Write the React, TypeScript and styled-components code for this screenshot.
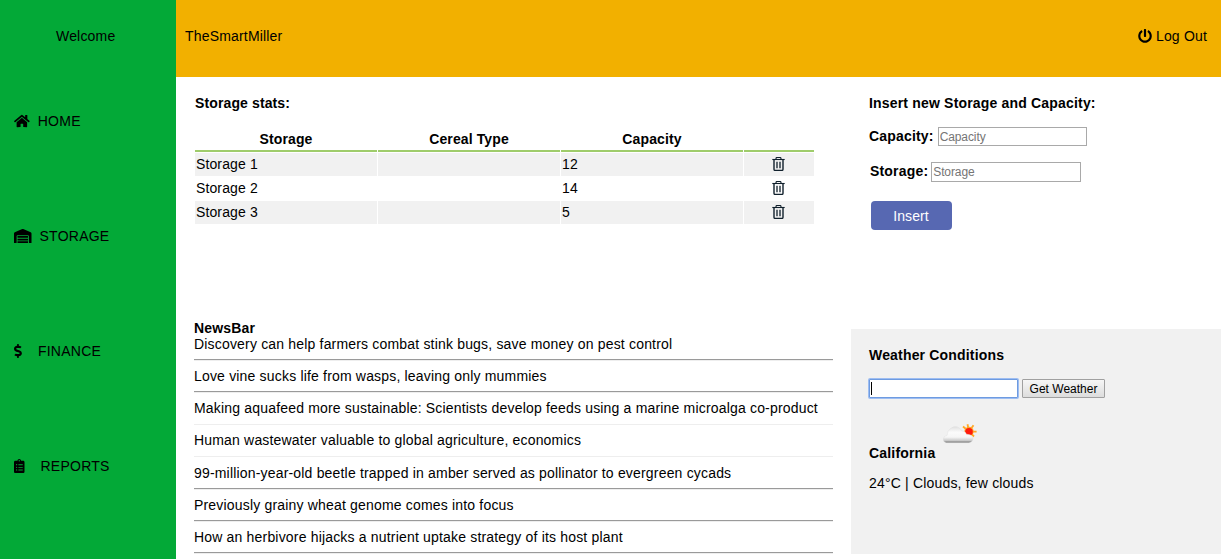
import React from 'react';
import styled, { createGlobalStyle } from 'styled-components';
import { FaHome, FaWarehouse, FaDollarSign, FaClipboardList, FaPowerOff } from 'react-icons/fa';

const GlobalStyle = createGlobalStyle`
  * { box-sizing: border-box; }
  body {
    margin: 0;
    overflow: hidden;
    background: #fff;
    color: #000;
    font: 14px/16px "Liberation Sans", Arial, sans-serif;
    letter-spacing: 0.18px;
  }
`;

const Page = styled.div`
  display: flex;
  height: 559px;
`;

const Sidebar = styled.nav`
  width: 176px;
  flex: none;
  background: #03a937;
`;

const Welcome = styled.div`
  padding: 28px 0 69px 56px;
`;

const MenuItem = styled.a<{ $gap: number; $icon: number }>`
  display: flex;
  align-items: center;
  gap: ${(p) => p.$gap}px;
  height: 16px;
  margin-bottom: 99px;
  padding-left: 14px;
  letter-spacing: 0.25px;
  svg {
    flex: none;
    width: ${(p) => p.$icon}px;
    height: 14px;
  }
`;

const Main = styled.div`
  flex: 1;
  min-width: 0;
`;

const TopBar = styled.header`
  display: flex;
  justify-content: space-between;
  height: 77px;
  padding: 28px 14px 0 9px;
  background: #f2b000;
`;

const LogOut = styled.a`
  display: flex;
  gap: 4px;
  height: 16px;
  svg { margin-top: 1px; }
`;

const Columns = styled.div`
  display: flex;
`;

const LeftColumn = styled.div`
  width: 675px;
  padding: 18px 18px 0 18px;
`;

const RightColumn = styled.div`
  flex: 1;
`;

const Heading = styled.h3`
  margin: 0;
  font-size: 14px;
  line-height: 16px;
  font-weight: bold;
`;

const StatsSection = styled.section`
  height: 225px;
  padding-left: 1px;
  letter-spacing: 0.12px;
`;

const StatsTable = styled.table`
  width: 621px;
  margin: 18px 0 0 -1px;
  table-layout: fixed;
  border-spacing: 1px;
  line-height: 16px;
`;

const HeadCell = styled.th<{ $w: number }>`
  width: ${(p) => p.$w}px;
  height: 22px;
  padding: 1px 0 3px;
  border-bottom: 2px solid #9fcc6b;
`;

const BodyRow = styled.tr`
  &:nth-child(odd) td { background: #f1f1f1; }
`;

const Cell = styled.td`
  height: 23px;
  padding: 0 1px 1px;
  vertical-align: middle;
`;

const IconCell = styled(Cell)`
  padding-right: 2px;
  svg { display: block; margin: 0 auto; }
`;

const NewsItem = styled.div`
  white-space: nowrap;
`;

const Rule = styled.hr<{ $faint?: boolean; $extra?: boolean }>`
  height: 2px;
  margin: 7px 0 ${(p) => (p.$extra ? 8 : 7)}px;
  border: 0;
  border-top: 1px solid ${(p) => (p.$faint ? 'transparent' : '#9a9a9a')};
  border-bottom: 1px solid #eee;
`;

const InsertForm = styled.form`
  height: 252px;
  padding: 18px 0 0 18px;
`;

const Field = styled.label<{ $top: number; $indent?: number; $gap: number }>`
  display: flex;
  align-items: center;
  gap: ${(p) => p.$gap}px;
  height: 19px;
  margin-top: ${(p) => p.$top}px;
  padding-left: ${(p) => p.$indent ?? 0}px;
  font-weight: bold;
  line-height: 19px;
`;

const TextInput = styled.input<{ $w: number; $h: number }>`
  flex: none;
  width: ${(p) => p.$w}px;
  height: ${(p) => p.$h}px;
  padding: 1px;
  border: 1px solid #a9a9a9;
  border-radius: 0;
  background: #fff;
  font: 12px "Liberation Sans", Arial, sans-serif;
  letter-spacing: -0.1px;
  &::placeholder { color: #757575; }
`;

const InsertButton = styled.button`
  display: block;
  width: 81px;
  height: 29px;
  margin: 20px 0 0 2px;
  padding: 0 1px 0 0;
  border: 0;
  border-radius: 4px;
  background: #5768b2;
  color: #fff;
  font: 14px "Liberation Sans", Arial, sans-serif;
  letter-spacing: 0.1px;
`;

const WeatherPanel = styled.section`
  height: 225px;
  padding: 18px 0 0 18px;
  background: #f1f1f1;
`;

const WeatherForm = styled.div`
  display: flex;
  gap: 4px;
  margin-top: 16px;
`;

const CityInput = styled.div`
  width: 149px;
  height: 19px;
  padding: 2px 1px;
  border: 1px solid #6e9be0;
  border-radius: 1px;
  background: #fff;
  box-shadow: 0 0 0 1px #9dbdf2;
`;

const Caret = styled.span`
  display: block;
  width: 1px;
  height: 13px;
  background: #000;
`;

const PlainButton = styled.button`
  width: 83px;
  height: 19px;
  padding: 0;
  border: 1px solid #a0a0a0;
  border-radius: 1px;
  background: linear-gradient(#f6f6f6, #dddddd);
  color: #000;
  font: 12px "Liberation Sans", Arial, sans-serif;
`;

const Place = styled.div`
  display: flex;
  align-items: flex-end;
  gap: 7px;
  height: 40px;
  margin-top: 23px;
  svg { margin-bottom: 17px; }
`;

const Conditions = styled.p`
  margin: 14px 0 0;
`;

const TrashIcon = () => (
  <svg width="13" height="14" viewBox="0 0 13 14" fill="none" stroke="#10202c">
    <path d="M0.300 2.500h12.400" strokeWidth="1.100" />
    <path d="M4 2.500V1.400q0-.9.9-.9h3.200q.9 0 .9.9v1.100" strokeWidth="1.100" />
    <path d="M2 2.800V12.200q0 1.200 1.200 1.200h6.600q1.200 0 1.200-1.200V2.800" strokeWidth="1.400" />
    <path d="M5 4.800v6.400M8 4.800v6.400" strokeWidth="1.300" />
  </svg>
);

const CloudSunIcon = () => (
  <svg width="35" height="21" viewBox="0 0 35 21">
    <defs>
      <linearGradient id="cloud" x1="0" y1="0" x2="0" y2="1">
        <stop offset="0" stopColor="#e0e0e0" />
        <stop offset="0.35" stopColor="#fbfbfb" />
        <stop offset="0.65" stopColor="#f6f6f6" />
        <stop offset="0.86" stopColor="#cccccc" />
        <stop offset="1" stopColor="#707070" />
      </linearGradient>
    </defs>
    <path
      d="M27 8.500l-1.500-7.200M27 8.500l4.500-6.300M27 8.500l7.600.2M27 8.500l5 5M27 8.500l-6-5"
      stroke="#ffa726"
      strokeWidth="1.800"
    />
    <circle cx="27" cy="8.500" r="4.700" fill="#ffa52b" />
    <circle cx="27" cy="8.800" r="3.800" fill="#ff1c0c" />
    <path
      d="M4.500 19.700Q1.100 19.200 1.300 16 1.700 12.900 5.100 12.300q.2-4.300 3.400-6.800Q11.700 2.900 15.300 3.900q3.200.9 4.500 4 3.300-.1 4.700 3.300 4.400-.2 6.300 2.900.8 5-3.800 5.600z"
      fill="url(#cloud)"
      stroke="#dcdcdc"
      strokeWidth="0.400"
    />
  </svg>
);

const menu = [
  { label: 'HOME', Icon: FaHome, width: 15.75, gap: 8 },
  { label: 'STORAGE', Icon: FaWarehouse, width: 17.5, gap: 8 },
  { label: 'FINANCE', Icon: FaDollarSign, width: 7.9, gap: 16 },
  { label: 'REPORTS', Icon: FaClipboardList, width: 10.5, gap: 16 },
];

const storages = [
  { name: 'Storage 1', cereal: '', capacity: 12 },
  { name: 'Storage 2', cereal: '', capacity: 14 },
  { name: 'Storage 3', cereal: '', capacity: 5 },
];

const news = [
  { title: 'Discovery can help farmers combat stink bugs, save money on pest control' },
  { title: 'Love vine sucks life from wasps, leaving only mummies' },
  { title: 'Making aquafeed more sustainable: Scientists develop feeds using a marine microalga co-product', faint: true },
  { title: 'Human wastewater valuable to global agriculture, economics', faint: true, extra: true },
  { title: '99-million-year-old beetle trapped in amber served as pollinator to evergreen cycads' },
  { title: 'Previously grainy wheat genome comes into focus' },
  { title: 'How an herbivore hijacks a nutrient uptake strategy of its host plant' },
];

export default function App() {
  return (
    <>
      <GlobalStyle />
      <Page>
        <Sidebar>
          <Welcome>Welcome</Welcome>
          {menu.map(({ label, Icon, width, gap }) => (
            <MenuItem key={label} $gap={gap} $icon={width}>
              <Icon />
              {label}
            </MenuItem>
          ))}
        </Sidebar>
        <Main>
          <TopBar>
            <span>TheSmartMiller</span>
            <LogOut>
              <FaPowerOff size={14} />
              Log Out
            </LogOut>
          </TopBar>
          <Columns>
            <LeftColumn>
              <StatsSection>
                <Heading>Storage stats:</Heading>
                <StatsTable>
                  <thead>
                    <tr>
                      <HeadCell $w={182}>Storage</HeadCell>
                      <HeadCell $w={182}>Cereal Type</HeadCell>
                      <HeadCell $w={182}>Capacity</HeadCell>
                      <HeadCell $w={70} />
                    </tr>
                  </thead>
                  <tbody>
                    {storages.map((s) => (
                      <BodyRow key={s.name}>
                        <Cell>{s.name}</Cell>
                        <Cell>{s.cereal}</Cell>
                        <Cell>{s.capacity}</Cell>
                        <IconCell><TrashIcon /></IconCell>
                      </BodyRow>
                    ))}
                  </tbody>
                </StatsTable>
              </StatsSection>
              <section>
                <Heading>NewsBar</Heading>
                {news.map((n) => (
                  <React.Fragment key={n.title}>
                    <NewsItem>{n.title}</NewsItem>
                    <Rule $faint={n.faint} $extra={n.extra} />
                  </React.Fragment>
                ))}
              </section>
            </LeftColumn>
            <RightColumn>
              <InsertForm>
                <Heading>Insert new Storage and Capacity:</Heading>
                <Field $top={16} $gap={4}>
                  Capacity: <TextInput $w={149} $h={19} placeholder="Capacity" />
                </Field>
                <Field $top={16} $indent={1} $gap={3}>
                  Storage: <TextInput $w={150} $h={20} placeholder="Storage" />
                </Field>
                <InsertButton type="button">Insert</InsertButton>
              </InsertForm>
              <WeatherPanel>
                <Heading>Weather Conditions</Heading>
                <WeatherForm>
                  <CityInput><Caret /></CityInput>
                  <PlainButton type="button">Get Weather</PlainButton>
                </WeatherForm>
                <Place>
                  <Heading>California</Heading>
                  <CloudSunIcon />
                </Place>
                <Conditions>24°C | Clouds, few clouds</Conditions>
              </WeatherPanel>
            </RightColumn>
          </Columns>
        </Main>
      </Page>
    </>
  );
}
